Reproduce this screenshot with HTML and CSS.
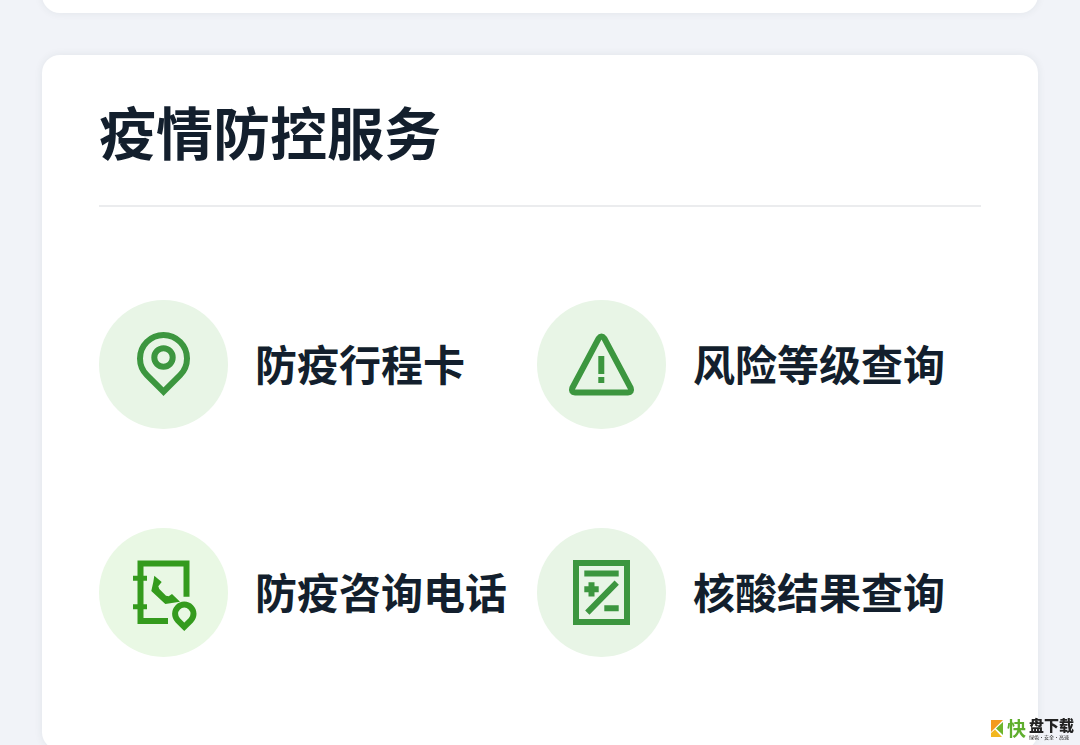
FILE: index.html
```html
<!DOCTYPE html>
<html lang="zh-CN">
  <head>
    <meta charset="UTF-8" />
    <meta name="viewport" content="width=device-width, initial-scale=1.0" />
    <title>疫情防控服务</title>
    <link rel="stylesheet" href="styles.css">
  </head>
  <body>
    <main>
      <div class="card card-prev"></div>

      <section class="card">
        <h1>疫情防控服务</h1>
        <nav class="services">
          <a class="service" href="#trip">
            <svg class="icon" viewBox="0 0 129 129" aria-hidden="true">
              <path d="M64.5 91.7 47.9 75.1A23.5 23.5 0 1 1 81.1 75.1Z" />
              <circle cx="64.5" cy="57.5" r="9.2" />
            </svg>
            <span>防疫行程卡</span>
          </a>
          <a class="service" href="#risk">
            <svg class="icon" viewBox="0 0 129 129" aria-hidden="true">
              <path d="M61.7 38.4Q64.5 34.4 67.3 38.4L93.7 88Q95.2 92.4 91 92.4H38Q33.8 92.4 35.3 88Z" />
              <path d="M64.3 56v18M64.3 77v6" />
            </svg>
            <span>风险等级查询</span>
          </a>
          <a class="service" href="#phone">
            <svg class="icon icon-bright" viewBox="0 0 129 129" aria-hidden="true">
              <path d="M87.5 68.7V35.5H41.5V93H69" />
              <path class="thin" d="M34 50.3h14M34 78.7h14" />
              <path class="solid" d="M55.3 47.7 62.7 54 59.3 58.3 60.3 61 67 67.7 69.7 68.3 73 66 81 73.7 66.3 76 52.3 63 54.3 54Z" />
              <path d="M85.3 98.8 78.8 92.3A9.2 9.2 0 1 1 91.8 92.3Z" />
            </svg>
            <span>防疫咨询电话</span>
          </a>
          <a class="service" href="#result">
            <svg class="icon" viewBox="0 0 129 129" aria-hidden="true">
              <rect x="39" y="35" width="51" height="59" />
              <path d="M47.3 45.5h34.4M50.3 84.7 79.7 54.7M67.3 80.3h14.4" />
              <path d="M47.3 61.3h14.4M54.5 54.2v14.4" />
            </svg>
            <span>核酸结果查询</span>
          </a>
        </nav>
      </section>
    </main>

    <div class="watermark">
      <svg class="watermark-logo" viewBox="0 0 13 17" aria-hidden="true">
        <path fill="#f39a1e" d="M0 0H12L4 8 0 12Z" />
        <path fill="#6fb52c" d="M5 8.5 12 2V15Z" />
        <path fill="#f3b71e" d="M0 13 4 9.5 11 17H0Z" />
      </svg>
      <span class="watermark-kuai">快</span>
      <span class="watermark-text">
        <b>盘下载</b>
        <small>绿色·安全·高速</small>
      </span>
    </div>
  </body>
</html>
```

FILE: styles.css
```css
body {
  margin: 0;
  background: #f1f3f8;
  color: #131f2d;
  font-family: "Noto Sans CJK SC", sans-serif;
}

main {
  padding: 0 42px;
}

.card {
  padding: 36px 57px 93px;
  background: #fff;
  border-radius: 18px;
  box-shadow: 0 0 8px rgba(40, 60, 70, 0.08);
}

.card-prev {
  margin: -67px 0 42px;
  padding: 40px 0;
}

h1 {
  margin: 0;
  padding-bottom: 36px;
  border-bottom: 2px solid #ebecee;
  font-size: 57px;
  font-weight: 700;
  line-height: 78px;
}

.services {
  display: grid;
  grid-template-columns: 1fr 1fr;
  row-gap: 99px;
  padding: 93px 6px 0 0;
}

.service {
  display: flex;
  align-items: center;
  gap: 27px;
  color: inherit;
  font-size: 42px;
  font-weight: 700;
  line-height: 60px;
  text-decoration: none;
  white-space: nowrap;
}

.service span {
  padding-bottom: 4px;
}

.icon {
  flex: none;
  width: 129px;
  height: 129px;
  border-radius: 50%;
  background: #e8f5e6;
  fill: none;
  stroke: #3c963f;
  stroke-width: 6;
}

.icon-bright {
  background: #e9f8e4;
  stroke: #349b1d;
}

.icon .thin {
  stroke-width: 5;
}

.icon .solid {
  fill: #349b1d;
  stroke: none;
}

/* download site badge, bottom right corner */
.watermark {
  position: fixed;
  right: 6px;
  bottom: 5px;
  display: flex;
  align-items: center;
  gap: 3px;
}

.watermark-logo {
  width: 13px;
  height: 17px;
}

.watermark-kuai {
  color: #5fae2e;
  font-size: 19px;
  font-weight: 700;
  line-height: 20px;
}

.watermark-text {
  display: flex;
  flex-direction: column;
  color: #222;
}

.watermark-text b {
  font-size: 15px;
  font-weight: 900;
  line-height: 17px;
}

.watermark-text small {
  font-size: 5px;
  line-height: 7px;
}
```
